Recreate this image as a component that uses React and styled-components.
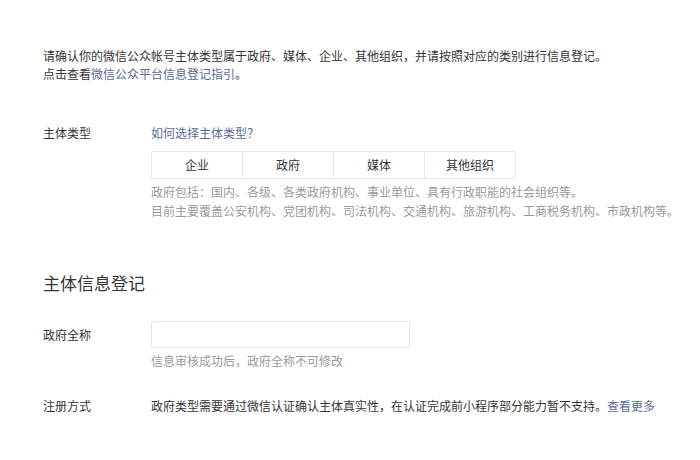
import React from "react";
import styled, { createGlobalStyle } from "styled-components";

const Global = createGlobalStyle`
  html, body { margin: 0; padding: 0; background: #fff; }
  body {
    font-family: "Noto Sans CJK SC", "Noto Sans", sans-serif;
    color: #353535;
    font-size: 12px;
  }
`;

const Page = styled.div`
  padding: 47px 0 0 43px;
  width: 657px;
  box-sizing: border-box;
`;

const Intro = styled.div`
  font-size: 12px;
  line-height: 18px;
  color: #353535;
`;

const Line = styled.p`
  margin: 0;
  white-space: nowrap;
`;

const Link = styled.a`
  color: #576b95;
  text-decoration: none;
  cursor: pointer;
`;

const Row = styled.div`
  display: flex;
  align-items: ${(p) => (p.$center ? "flex-start" : "flex-start")};
  margin-top: ${(p) => p.$mt}px;
`;

const Label = styled.div`
  width: 108px;
  flex: none;
  font-size: 12px;
  line-height: ${(p) => p.$lh || 18}px;
  color: #353535;
`;

const Content = styled.div`
  display: flex;
  flex-direction: column;
  font-size: 12px;
  line-height: 18px;
  white-space: nowrap;
`;

const Tabs = styled.div`
  display: flex;
  margin-top: 9px;
  width: 365px;
  border: 1px solid #e7e7e7;
  border-radius: 2px;
  box-sizing: border-box;
  height: 28px;
`;

const Tab = styled.div`
  flex: 1;
  display: flex;
  align-items: center;
  justify-content: center;
  color: #353535;
  font-size: 12px;
  & + & { border-left: 1px solid #e7e7e7; }
`;

const Desc = styled.div`
  margin-top: ${(p) => p.$mt || 0}px;
  color: #9a9a9a;
  font-size: 12px;
  line-height: 19px;
`;

const Heading = styled.h2`
  margin: 51px 0 0;
  font-size: 17px;
  font-weight: normal;
  line-height: 24px;
  color: #353535;
`;

const Input = styled.input`
  width: 259px;
  height: 27px;
  box-sizing: border-box;
  border: 1px solid #e4e4e4;
  border-radius: 2px;
  outline: none;
  padding: 0 8px;
  font-family: inherit;
  font-size: 12px;
`;

const Hint = styled.div`
  margin-top: 4px;
  color: #9a9a9a;
  font-size: 12px;
  line-height: 18px;
`;

const Text = styled.div`
  color: #353535;
  font-size: 12px;
  line-height: 18px;
  white-space: nowrap;
`;

export default function App() {
  return (
    <>
      <Global />
      <Page>
        <Intro>
          <Line>请确认你的微信公众帐号主体类型属于政府、媒体、企业、其他组织，并请按照对应的类别进行信息登记。</Line>
          <Line>
            点击查看<Link>微信公众平台信息登记指引</Link>。
          </Line>
        </Intro>

        <Row $mt={41}>
          <Label>主体类型</Label>
          <Content>
            <Link>如何选择主体类型？</Link>
            <Tabs>
              <Tab>企业</Tab>
              <Tab>政府</Tab>
              <Tab>媒体</Tab>
              <Tab>其他组织</Tab>
            </Tabs>
            <Desc $mt={3}>政府包括：国内、各级、各类政府机构、事业单位、具有行政职能的社会组织等。</Desc>
            <Desc>目前主要覆盖公安机构、党团机构、司法机构、交通机构、旅游机构、工商税务机构、市政机构等。</Desc>
          </Content>
        </Row>

        <Heading>主体信息登记</Heading>

        <Row $mt={26}>
          <Label $lh={27}>政府全称</Label>
          <Content>
            <Input />
            <Hint>信息审核成功后，政府全称不可修改</Hint>
          </Content>
        </Row>

        <Row $mt={27}>
          <Label>注册方式</Label>
          <Text>
            政府类型需要通过微信认证确认主体真实性，在认证完成前小程序部分能力暂不支持。<Link>查看更多</Link>
          </Text>
        </Row>
      </Page>
    </>
  );
}
